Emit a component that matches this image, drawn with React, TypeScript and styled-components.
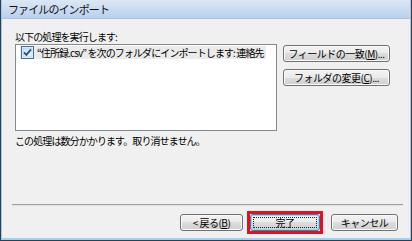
import React from 'react';
import styled, { createGlobalStyle } from 'styled-components';

const Global = createGlobalStyle`
  html, body { margin: 0; padding: 0; background: #f0f0f0; }
  body {
    width: 412px; height: 241px; overflow: hidden;
    font-family: "Noto Sans CJK JP", "Noto Sans", sans-serif;
  }
`;

const Window = styled.div`
  width: 412px; height: 241px; box-sizing: border-box;
  display: flex; flex-direction: column;
  border-left: 1px solid #2d3f52;
  border-right: 1px solid #2d3f52;
  border-bottom: 1px solid #2d3f52;
  background: #f0f0f0;
`;

const Frame = styled.div`
  flex: 1; min-height: 0;
  display: flex; flex-direction: column;
  border-left: 1px solid #a6c6e8;
  border-right: 1px solid #a6c6e8;
  border-bottom: 2px solid #9fd0ef;
`;

const TitleBar = styled.div`
  height: 18px; flex: none;
  display: flex; align-items: center;
  padding-left: 6px;
  background: linear-gradient(#dce7f5, #b9d0ed);
  border-bottom: 1px solid #a9c1de;
  font-size: 11px; letter-spacing: -0.9px; color: #111;
`;

const Body = styled.div`
  flex: 1; min-height: 0;
  display: flex; flex-direction: column;
  padding: 11px 8px 0 13px;
  background: #f0f0f0;
  font-size: 10px; color: #000;
`;

const Label = styled.div`
  height: 13px; line-height: 13px;
  letter-spacing: -0.9px;
  white-space: nowrap;
`;

const MainRow = styled.div`
  display: flex; gap: 6px; margin-top: 1px;
`;

const ListBox = styled.div`
  width: 262px; height: 87px; box-sizing: border-box;
  border: 1px solid #828790;
  background: #fff;
  padding: 1px 4px;
`;

const Item = styled.div`
  display: inline-flex; align-items: center; gap: 3px;
  height: 13px; padding: 0 2px 0 1px;
  background: #ebebeb;
  white-space: nowrap;
  letter-spacing: -0.9px;
  line-height: 13px;
`;

const SideButtons = styled.div`
  display: flex; flex-direction: column; gap: 7px;
  margin-top: 1px;
`;

const Button = styled.button<{ $w: number }>`
  position: relative;
  width: ${p => p.$w}px; height: 17px; box-sizing: border-box;
  padding: 0; margin: 0;
  border: 1px solid #707070; border-radius: 3px;
  background: linear-gradient(#f2f2f2 0%, #ebebeb 50%, #dddddd 50%, #cfcfcf 100%);
  box-shadow: inset 0 0 0 1px #fbfbfb;
  font-family: inherit; font-size: 10px; letter-spacing: -0.5px; color: #000;
  line-height: 15px;
  display: flex; align-items: center; justify-content: center;
  white-space: pre;
`;

const DefaultButton = styled(Button)`
  border-color: #3c7fb1;
  box-shadow: inset 0 0 0 1px #8fd8f6;
  &::after {
    content: '';
    position: absolute; inset: 2px;
    border: 1px dotted #222;
    border-radius: 1px;
  }
`;

const Note = styled.div`
  margin-top: 3px;
  height: 13px; line-height: 13px;
  letter-spacing: -0.9px;
  white-space: nowrap;
`;

const Spacer = styled.div` flex: 1; `;

const Separator = styled.div`
  height: 0;
  margin: 0 -1px 0 -3px;
  border-top: 1px solid #a0a0a0;
  border-bottom: 1px solid #e2e2e2;
`;

const ButtonRow = styled.div`
  display: flex; justify-content: flex-end; align-items: center;
  margin-top: 5px; margin-bottom: 4px;
  padding-right: 4px;
  height: 23px;
`;

const Highlight = styled.div`
  border: 3px solid #e5101c;
  display: flex;
  margin: 0 8px 0 4px;
`;

const Checkbox = () => (
  <svg width="13" height="13" viewBox="0 0 13 13">
    <defs>
      <linearGradient id="cb" x1="0" y1="0" x2="1" y2="1">
        <stop offset="0" stopColor="#c6e2f6" />
        <stop offset="1" stopColor="#eef7fd" />
      </linearGradient>
    </defs>
    <rect x="0.5" y="0.5" width="12" height="12" fill="#f4f9fd" stroke="#4a6e96" />
    <rect x="2" y="2" width="9" height="9" fill="url(#cb)" stroke="#9fc3e2" strokeWidth="0.6" />
    <path d="M3 6.3 L5.4 8.8 L10 3.4" fill="none" stroke="#23508a" strokeWidth="1.8" />
  </svg>
);

export default function App() {
  return (
    <>
      <Global />
      <Window>
        <Frame>
          <TitleBar>ファイルのインポート</TitleBar>
          <Body>
            <Label>以下の処理を実行します:</Label>
            <MainRow>
              <ListBox>
                <Item>
                  <Checkbox />
                  <span>“住所録.csv” を次のフォルダにインポートします: 連絡先</span>
                </Item>
              </ListBox>
              <SideButtons>
                <Button $w={107}>フィールドの一致(<u>M</u>)...</Button>
                <Button $w={107}>フォルダの変更(<u>C</u>)...</Button>
              </SideButtons>
            </MainRow>
            <Note>この処理は数分かかります。取り消せません。</Note>
            <Spacer />
            <Separator />
            <ButtonRow>
              <Button $w={63}>&lt; 戻る(<u>B</u>)</Button>
              <Highlight>
                <DefaultButton $w={70}>完了</DefaultButton>
              </Highlight>
              <Button $w={67}>キャンセル</Button>
            </ButtonRow>
          </Body>
        </Frame>
      </Window>
    </>
  );
}
